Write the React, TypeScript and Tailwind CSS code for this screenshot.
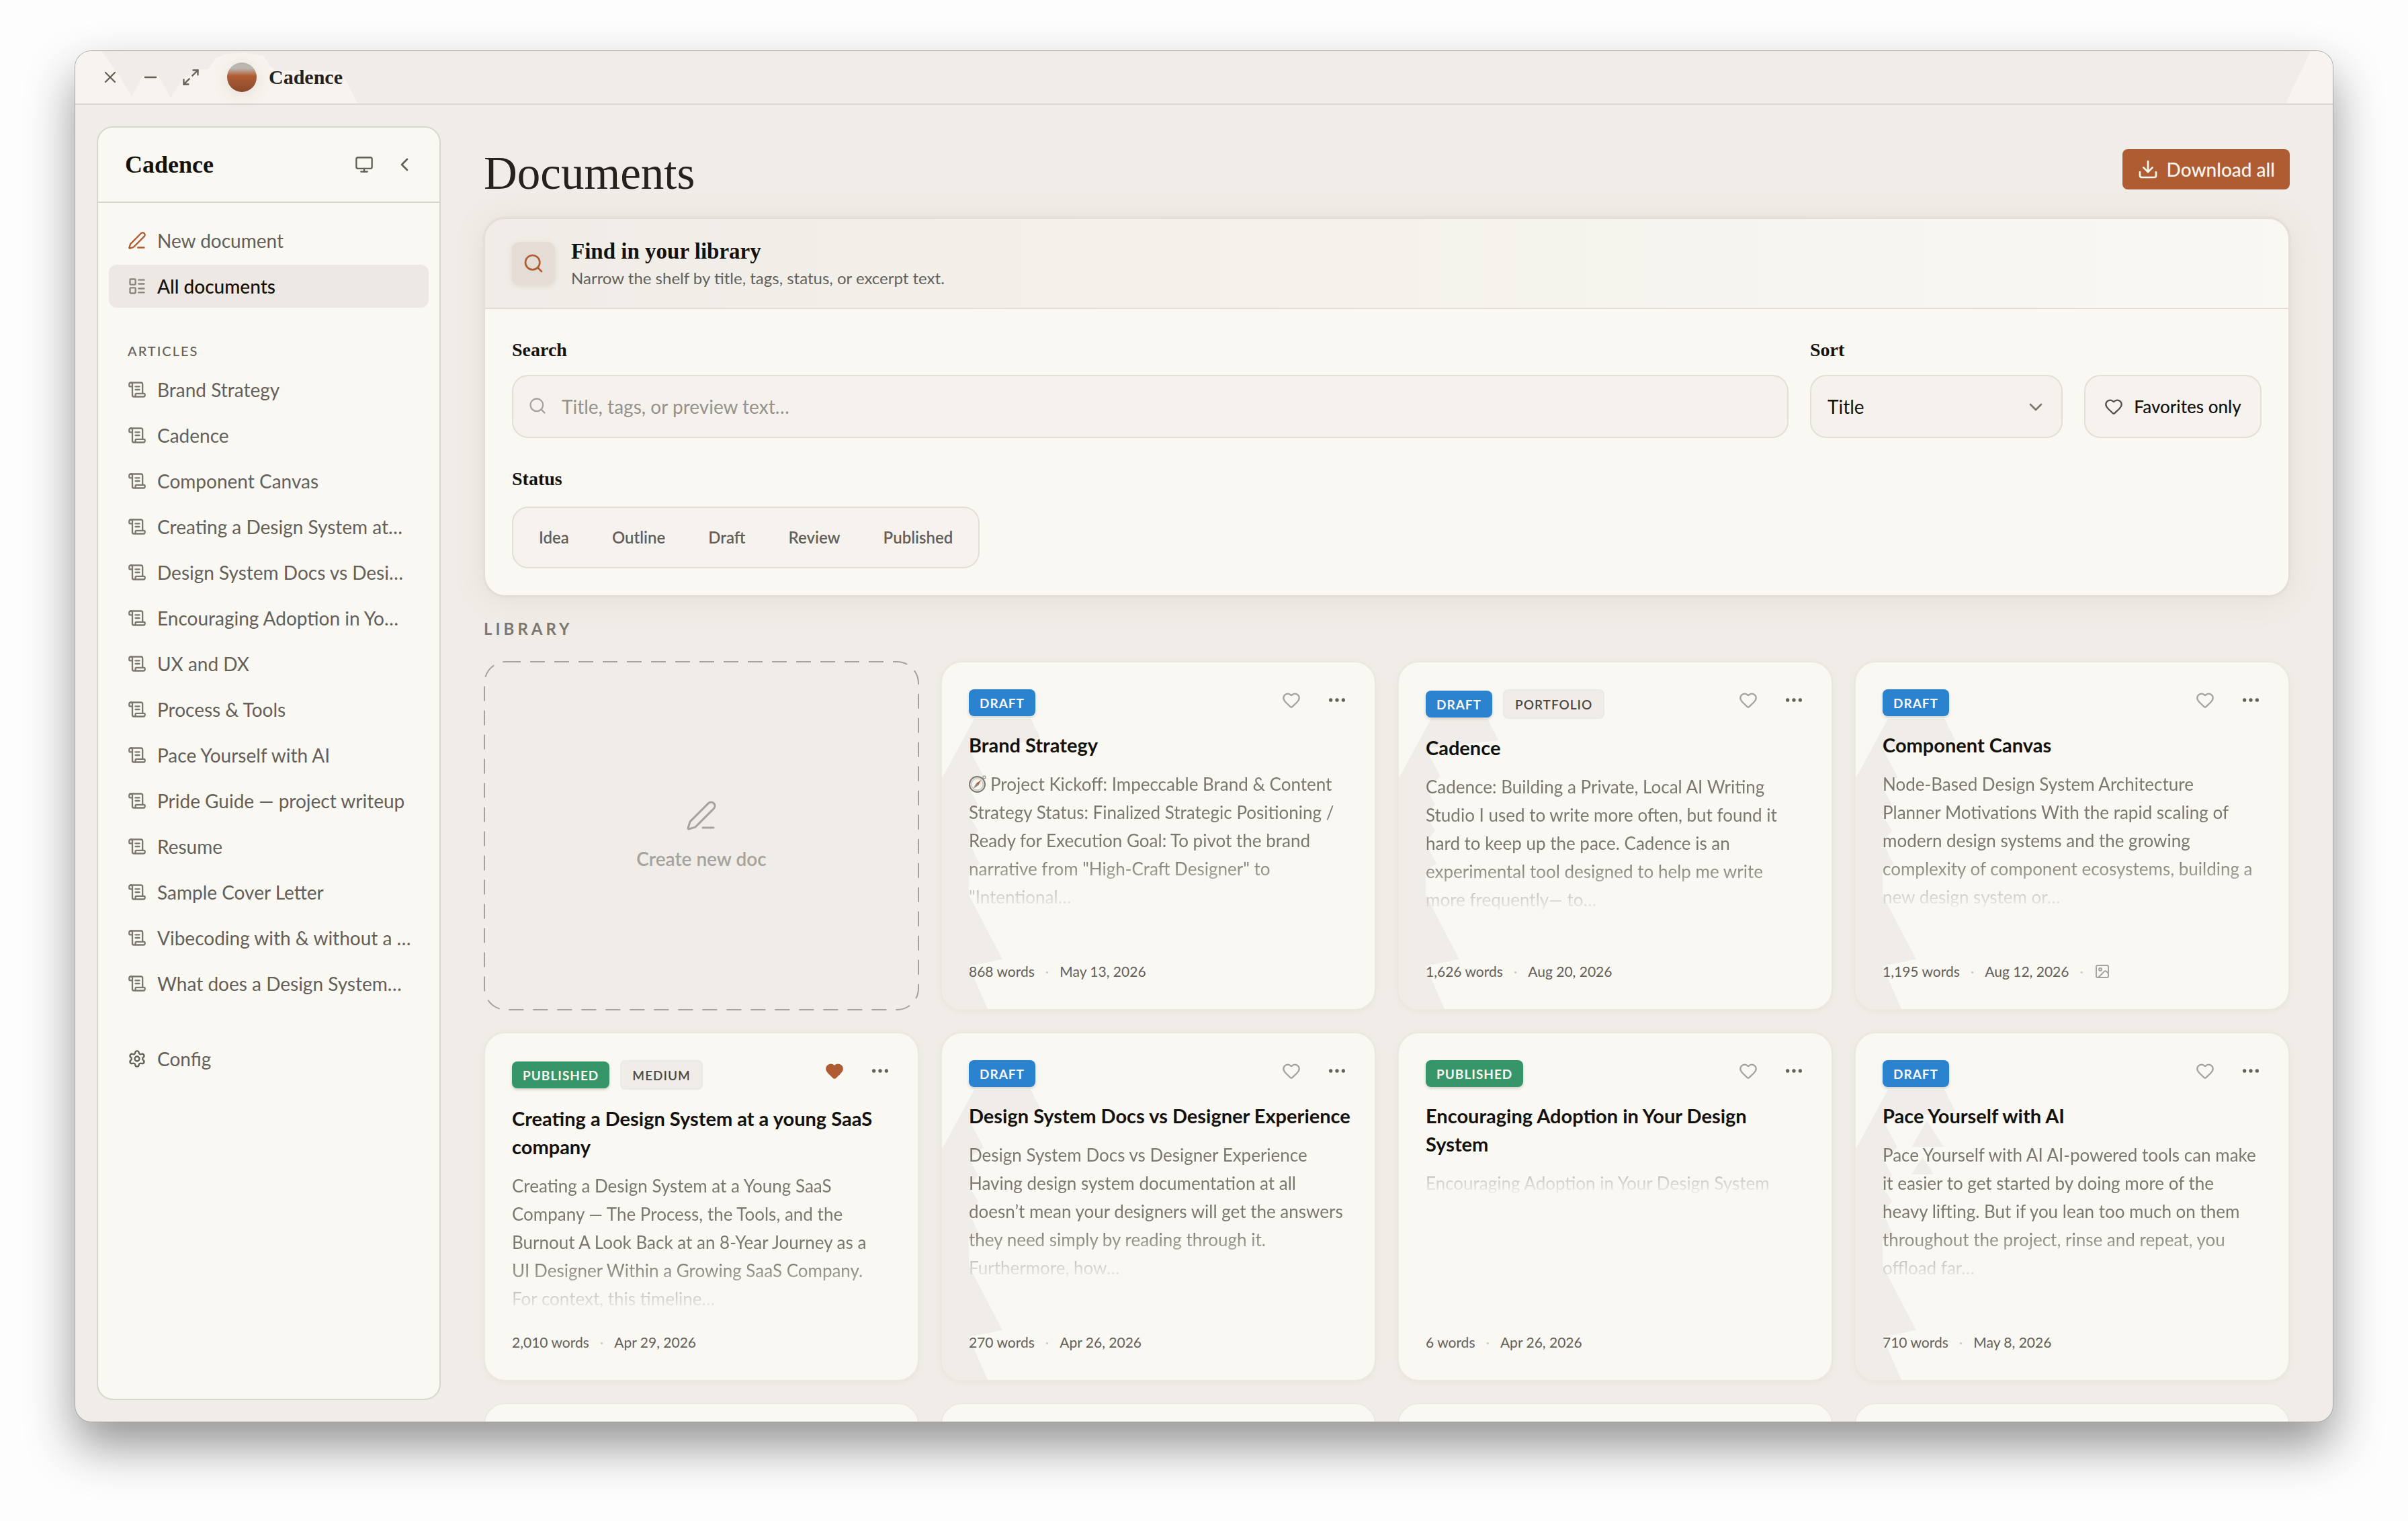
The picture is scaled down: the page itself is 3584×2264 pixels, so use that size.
import {
  ChevronDown,
  ChevronLeft,
  Download,
  Ellipsis,
  Heart,
  Image as ImageIcon,
  LayoutList,
  Maximize2,
  Minus,
  Monitor,
  PenLine,
  ScrollText,
  Search,
  Settings,
  X,
} from 'lucide-react'

interface Doc {
  title: string
  status: 'Draft' | 'Published'
  tag?: string
  excerpt: string
  words: string
  date: string
  favorite?: boolean
  hasImage?: boolean
  compass?: boolean
  peaks?: boolean
}

const articles = [
  'Brand Strategy',
  'Cadence',
  'Component Canvas',
  'Creating a Design System at…',
  'Design System Docs vs Desi…',
  'Encouraging Adoption in Yo…',
  'UX and DX',
  'Process & Tools',
  'Pace Yourself with AI',
  'Pride Guide — project writeup',
  'Resume',
  'Sample Cover Letter',
  'Vibecoding with & without a …',
  'What does a Design System…',
]

const statuses = ['Idea', 'Outline', 'Draft', 'Review', 'Published']

const docs: Doc[] = [
  {
    title: 'Brand Strategy',
    status: 'Draft',
    excerpt:
      'Project Kickoff: Impeccable Brand & Content\nStrategy Status: Finalized Strategic Positioning /\nReady for Execution Goal: To pivot the brand\nnarrative from "High-Craft Designer" to\n"Intentional…',
    words: '868 words',
    date: 'May 13, 2026',
    compass: true,
  },
  {
    title: 'Cadence',
    status: 'Draft',
    tag: 'Portfolio',
    excerpt:
      'Cadence: Building a Private, Local AI Writing\nStudio I used to write more often, but found it\nhard to keep up the pace. Cadence is an\nexperimental tool designed to help me write\nmore frequently— to…',
    words: '1,626 words',
    date: 'Aug 20, 2026',
  },
  {
    title: 'Component Canvas',
    status: 'Draft',
    excerpt:
      'Node-Based Design System Architecture\nPlanner Motivations With the rapid scaling of\nmodern design systems and the growing\ncomplexity of component ecosystems, building a\nnew design system or…',
    words: '1,195 words',
    date: 'Aug 12, 2026',
    hasImage: true,
  },
  {
    title: 'Creating a Design System at a young SaaS\ncompany',
    status: 'Published',
    tag: 'Medium',
    excerpt:
      'Creating a Design System at a Young SaaS\nCompany — The Process, the Tools, and the\nBurnout A Look Back at an 8-Year Journey as a\nUI Designer Within a Growing SaaS Company.\nFor context, this timeline…',
    words: '2,010 words',
    date: 'Apr 29, 2026',
    favorite: true,
  },
  {
    title: 'Design System Docs vs Designer Experience',
    status: 'Draft',
    excerpt:
      'Design System Docs vs Designer Experience\nHaving design system documentation at all\ndoesn’t mean your designers will get the answers\nthey need simply by reading through it.\nFurthermore, how…',
    words: '270 words',
    date: 'Apr 26, 2026',
  },
  {
    title: 'Encouraging Adoption in Your Design\nSystem',
    status: 'Published',
    excerpt: 'Encouraging Adoption in Your Design System',
    words: '6 words',
    date: 'Apr 26, 2026',
  },
  {
    title: 'Pace Yourself with AI',
    status: 'Draft',
    excerpt:
      'Pace Yourself with AI AI-powered tools can make\nit easier to get started by doing more of the\nheavy lifting. But if you lean too much on them\nthroughout the project, rinse and repeat, you\noffload far…',
    words: '710 words',
    date: 'May 8, 2026',
    peaks: true,
  },
]

const TitleBar = () => (
  <header className="relative flex h-20 shrink-0 items-center border-b-2 border-[#dad6d1] pl-[38px]">
    <svg className="absolute left-0 top-0 h-[78px] w-[420px]" viewBox="0 0 420 78" aria-hidden="true">
      <path
        d="M0 0H39L64 34L84 68L100 37H124L142 70L160 41L187 27H198L209 11L222 5L249 2L280 7L289 21L298 29L390 30L402 42L420 78H0Z"
        fill="#f7f4ef"
      />
    </svg>
    <svg className="absolute right-0 top-0 h-[78px] w-[70px]" viewBox="0 0 70 78" aria-hidden="true">
      <path d="M37 0H70V78H0Z" fill="#f7f4ef" />
    </svg>
    <div className="relative flex items-center gap-8 text-[#645f59]">
      <button type="button" aria-label="Close">
        <X className="size-7" strokeWidth={2} />
      </button>
      <button type="button" aria-label="Minimize">
        <Minus className="size-7" strokeWidth={2} />
      </button>
      <button type="button" aria-label="Maximize">
        <Maximize2 className="size-7" strokeWidth={2} />
      </button>
    </div>
    <span className="relative ml-10 size-11 rounded-full bg-linear-to-b from-[#b9b6b0] from-20% via-[#b05c33] via-45% to-[#8a4a2d] shadow-[0_4px_24px_rgba(120,90,70,0.14)]" />
    <span className="relative ml-[18px] font-['Liberation_Serif',serif] text-[30px] font-bold leading-10 text-[#25211c]">
      Cadence
    </span>
  </header>
)

const Sidebar = () => {
  const rowClass = 'flex h-16 items-center gap-4 rounded-xl px-7 text-[28px] leading-10 text-[#645f59]'

  return (
    <aside className="flex w-[512px] shrink-0 flex-col rounded-3xl border-2 border-[#d9d5cf] bg-[#f9f8f3]">
      <div className="flex h-[112px] shrink-0 items-center border-b-2 border-[#d9d5cf] pl-10 pr-9">
        <span className="flex-1 font-['Liberation_Serif',serif] text-4xl font-bold text-[#14110c]">Cadence</span>
        <div className="flex items-center gap-[30px] text-[#645f59]">
          <button type="button" aria-label="Display mode">
            <Monitor className="size-7" strokeWidth={2} />
          </button>
          <button type="button" aria-label="Collapse sidebar">
            <ChevronLeft className="size-8" strokeWidth={2} />
          </button>
        </div>
      </div>
      <nav className="flex flex-col gap-1 px-4 pt-6">
        <a href="#new" className={rowClass}>
          <PenLine className="size-7 shrink-0 text-[#b05c33]" strokeWidth={2} />
          New document
        </a>
        <a
          href="#all"
          className="flex h-16 items-center gap-4 rounded-xl bg-[#ede8e4] px-7 text-[28px] font-medium leading-10 text-[#14110c]"
        >
          <LayoutList className="size-7 shrink-0 text-[#8b857f]" strokeWidth={2} />
          All documents
        </a>
        <h2 className="mt-11 px-7 pb-1.5 text-xl font-medium uppercase leading-8 tracking-[2px] text-[#645f59]">
          Articles
        </h2>
        {articles.map((article) => (
          <a key={article} href="#article" className={rowClass}>
            <ScrollText className="size-7 shrink-0 text-[#7d7771]" strokeWidth={2} />
            <span className="whitespace-nowrap">{article}</span>
          </a>
        ))}
        <a href="#config" className={`${rowClass} mt-11`}>
          <Settings className="size-7 shrink-0" strokeWidth={2} />
          Config
        </a>
      </nav>
    </aside>
  )
}

const FilterPanel = () => {
  const labelClass = "block font-['Liberation_Serif',serif] text-[28px] font-bold leading-[42px] text-[#14110c]"
  const fieldClass = 'h-[94px] w-full rounded-3xl border-2 border-[#e5ded8] bg-[#f5f2ed] text-[28px]'

  return (
    <section className="overflow-hidden rounded-[32px] border-2 border-[#e4dcd5] bg-[#f9f8f3] shadow-[0_0_0_2px_#e8e1db,0_4px_48px_rgba(150,110,90,0.12)]">
      <div className="flex h-[134px] items-center gap-6 border-b-2 border-[#e4dcd5] bg-linear-to-r from-[#f0ede8] via-[#f5f2ec] to-[#f9f8f3] px-10">
        <span className="flex size-16 items-center justify-center rounded-xl bg-[#e4dcd5] text-[#b05c33] shadow-[0_2px_8px_rgba(120,90,70,0.15)]">
          <Search className="size-8" strokeWidth={2} />
        </span>
        <div>
          <h2 className="font-['Liberation_Serif',serif] text-[33px] font-bold leading-11 text-[#14110c]">
            Find in your library
          </h2>
          <p className="text-2xl leading-9 text-[#645f59]">
            Narrow the shelf by title, tags, status, or excerpt text.
          </p>
        </div>
      </div>
      <div className="flex flex-col gap-10 p-10">
        <div className="flex items-end gap-8">
          <div className="flex flex-1 flex-col gap-4">
            <label htmlFor="search" className={labelClass}>
              Search
            </label>
            <div className="relative">
              <Search className="absolute left-6 top-8 size-7 text-[#a6a29d]" strokeWidth={2} />
              <input
                id="search"
                type="text"
                placeholder="Title, tags, or preview text…"
                className={`${fieldClass} pl-[72px] pr-6 placeholder:text-[#96918a]`}
              />
            </div>
          </div>
          <div className="flex w-[376px] flex-col gap-4">
            <label htmlFor="sort" className={labelClass}>
              Sort
            </label>
            <div className="relative">
              <select id="sort" className={`${fieldClass} appearance-none px-6 text-[#14110c]`}>
                <option>Title</option>
              </select>
              <ChevronDown
                className="pointer-events-none absolute right-6 top-8 size-8 text-[#7d7771]"
                strokeWidth={2}
              />
            </div>
          </div>
          <button
            type="button"
            className="flex h-[94px] w-[264px] items-center justify-center gap-4 rounded-3xl border-2 border-[#e5ded8] bg-[#f6f3ee] text-[26px] font-medium text-[#14110c]"
          >
            <Heart className="size-7 text-[#55504b]" strokeWidth={2} />
            Favorites only
          </button>
        </div>
        <div className="flex flex-col items-start gap-5">
          <span id="status-label" className={labelClass}>
            Status
          </span>
          <div
            role="group"
            aria-labelledby="status-label"
            className="flex h-[92px] items-center gap-2 rounded-3xl border-2 border-[#e5ded8] bg-[#f6f3ee] px-[10px]"
          >
            {statuses.map((status) => (
              <button key={status} type="button" className="h-16 px-7 text-2xl font-semibold text-[#645f59]">
                {status}
              </button>
            ))}
          </div>
        </div>
      </div>
    </section>
  )
}

const NewDocCard = () => (
  <button
    type="button"
    className="relative flex h-full flex-col items-center justify-center gap-5 text-[28px] font-semibold leading-10 text-[#a6a29d]"
  >
    <svg className="absolute inset-0 size-full overflow-visible" aria-hidden="true">
      <rect
        x="1"
        y="1"
        rx="32"
        className="h-[calc(100%-2px)] w-[calc(100%-2px)]"
        fill="none"
        stroke="#a6a29d"
        strokeWidth="2"
        strokeDasharray="22 14"
      />
    </svg>
    <PenLine className="size-12" strokeWidth={1.5} />
    Create new doc
  </button>
)

const Compass = () => (
  <svg className="mr-1.5 inline-block size-[26px] align-[-3px]" viewBox="0 0 26 26" aria-hidden="true">
    <circle cx="23" cy="3" r="2" fill="none" stroke="#a6a29d" strokeWidth="1.5" />
    <circle cx="12.5" cy="13.5" r="11.5" fill="#e4e1dc" stroke="#7d7771" strokeWidth="2" />
    <circle cx="12.5" cy="13.5" r="8.5" fill="#f6f4f0" stroke="#bab6b0" />
    <path d="M18.5 7L14 15L11 12Z" fill="#b05c33" />
    <path d="M6.5 20L11 12L14 15Z" fill="#8b857f" />
  </svg>
)

const DocCard = ({ doc }: { doc: Doc }) => (
  <article className="relative flex flex-col overflow-hidden rounded-[32px] border-2 border-[#ede7e2] bg-[#f9f8f3] p-10 shadow-[0_2px_8px_rgba(150,110,90,0.08)]">
    {doc.status === 'Draft' && (
      <svg className="absolute left-0 top-0 h-[516px] w-[160px]" viewBox="0 0 160 516" aria-hidden="true">
        <path
          d="M48 84H132L148 116L40 128L62 170L40 186L54 212L40 228L54 250L40 268L56 300L40 310V346L90 442L40 452L68 516H0V172Z"
          fill="#f0ede8"
        />
        {doc.peaks && <path d="M106 130L131 169H83ZM100 184L116 210H83Z" fill="#f0ede8" />}
      </svg>
    )}
    <div className="relative flex items-start justify-between">
      <div className="flex items-center gap-4">
        <span
          className={`flex h-10 items-center rounded-lg px-4 text-[19px] font-bold uppercase leading-none tracking-[1px] text-[#f9f8f3] shadow-[0_2px_4px_rgba(60,40,30,0.2)] ${
            doc.status === 'Draft' ? 'bg-[#2b82cf]' : 'bg-[#36966a]'
          }`}
        >
          {doc.status}
        </span>
        {doc.tag && (
          <span className="flex h-11 items-center rounded-lg border-2 border-[#ece8e3] bg-[#f0ede8] px-4 text-[19px] font-semibold uppercase leading-none tracking-[1px] text-[#4c4741]">
            {doc.tag}
          </span>
        )}
      </div>
      <div className="flex items-center gap-9">
        <button type="button" aria-label="Favorite" className="flex size-8 items-center justify-center">
          <Heart
            className={doc.favorite ? 'size-7 fill-[#b05c33] text-[#b05c33]' : 'size-7 text-[#a6a29d]'}
            strokeWidth={2}
          />
        </button>
        <button
          type="button"
          aria-label="More actions"
          className="flex size-8 items-center justify-center text-[#645f59]"
        >
          <Ellipsis className="size-8" strokeWidth={2} />
        </button>
      </div>
    </div>
    <h3 className="relative mt-[22px] whitespace-pre text-[29px] font-bold leading-[42px] text-[#14110c]">
      {doc.title}
    </h3>
    <p className="relative mt-4 whitespace-pre text-[26px] leading-[42px] text-[#7d7771] [mask-image:linear-gradient(to_top,transparent,#000_76px)]">
      {doc.compass && <Compass />}
      {doc.excerpt}
    </p>
    <div className="relative mt-auto flex items-center gap-4 text-[21px] leading-8 text-[#645f59]">
      <span>{doc.words}</span>
      <span className="text-[#cfcac4]">·</span>
      <span>{doc.date}</span>
      {doc.hasImage && (
        <>
          <span className="text-[#cfcac4]">·</span>
          <ImageIcon className="size-6 text-[#a6a29d]" strokeWidth={2} />
        </>
      )}
    </div>
  </article>
)

const App = () => {
  return (
    <div className="flex h-screen bg-[#fdfdfd] px-28 pb-[148px] pt-[76px] font-[Lato,sans-serif]">
      <div className="flex flex-1 flex-col overflow-hidden rounded-3xl bg-[#f0ede8] shadow-[0_0_0_1px_#aaaaaa,0_36px_72px_rgba(0,0,0,0.42)]">
        <TitleBar />
        <div className="flex min-h-0 flex-1 pl-8">
          <div className="flex py-8">
            <Sidebar />
          </div>
          <main className="min-w-0 flex-1 overflow-hidden px-16 pt-[66px]">
            <div className="mb-[30px] flex items-start justify-between">
              <h1 className="font-['Liberation_Serif',serif] text-[69px] leading-[72px] text-[#25211c]">Documents</h1>
              <button
                type="button"
                className="flex h-[60px] items-center gap-3 rounded-lg bg-[#b05c33] px-[22px] text-[28px] font-medium text-[#f9f8f3]"
              >
                <Download className="size-8" strokeWidth={2} />
                Download all
              </button>
            </div>
            <FilterPanel />
            <h2 className="mb-[30px] mt-[30px] text-2xl font-bold uppercase leading-9 tracking-[5px] text-[#7d7771]">
              Library
            </h2>
            <div className="grid auto-rows-[520px] grid-cols-4 gap-8">
              <NewDocCard />
              {docs.map((doc) => (
                <DocCard key={doc.title} doc={doc} />
              ))}
              {[0, 1, 2, 3].map((slot) => (
                <article key={slot} className="rounded-[32px] border-2 border-[#ede7e2] bg-[#f9f8f3]" />
              ))}
            </div>
          </main>
        </div>
      </div>
    </div>
  )
}

export default App
